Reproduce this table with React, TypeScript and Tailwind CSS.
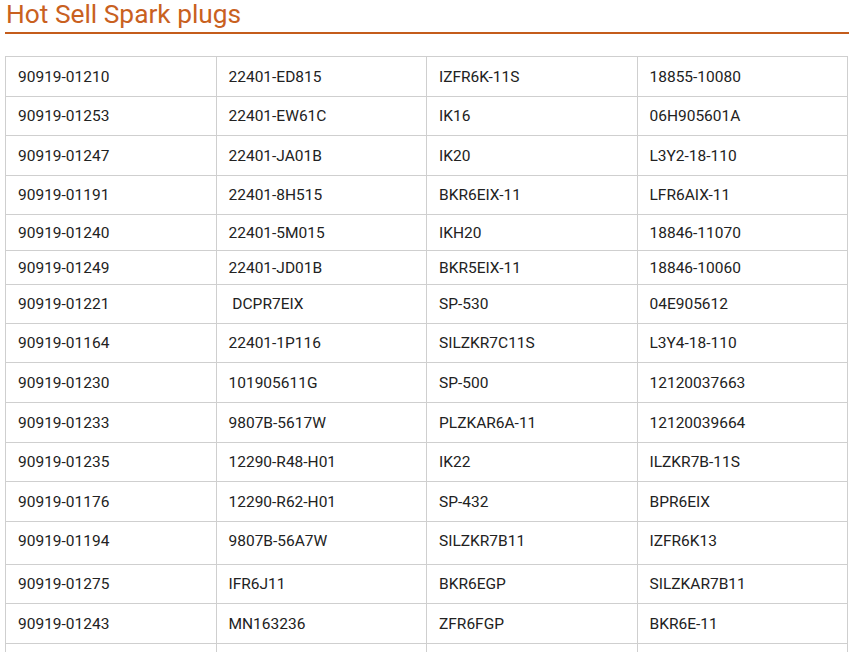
import React from 'react';

// 每行: 四列型号 + 行高(像素) + 可选的内边距
const ROWS: { cells: string[]; h: string; pad?: string }[] = [
  { cells: ['90919-01210', '22401-ED815', 'IZFR6K-11S', '18855-10080'], h: 'h-[40px]' },
  { cells: ['90919-01253', '22401-EW61C', 'IK16', '06H905601A'], h: 'h-[39px]' },
  { cells: ['90919-01247', '22401-JA01B', 'IK20', 'L3Y2-18-110'], h: 'h-[40px]' },
  { cells: ['90919-01191', '22401-8H515', 'BKR6EIX-11', 'LFR6AIX-11'], h: 'h-[39px]' },
  { cells: ['90919-01240', '22401-5M015', 'IKH20', '18846-11070'], h: 'h-[36px]' },
  { cells: ['90919-01249', '22401-JD01B', 'BKR5EIX-11', '18846-10060'], h: 'h-[34px]' },
  { cells: ['90919-01221', '\u00a0DCPR7EIX', 'SP-530', '04E905612'], h: 'h-[39px]' },
  { cells: ['90919-01164', '22401-1P116', 'SILZKR7C11S', 'L3Y4-18-110'], h: 'h-[39px]' },
  { cells: ['90919-01230', '101905611G', 'SP-500', '12120037663'], h: 'h-[40px]' },
  { cells: ['90919-01233', '9807B-5617W', 'PLZKAR6A-11', '12120039664'], h: 'h-[40px]' },
  { cells: ['90919-01235', '12290-R48-H01', 'IK22', 'ILZKR7B-11S'], h: 'h-[39px]' },
  { cells: ['90919-01176', '12290-R62-H01', 'SP-432', 'BPR6EIX'], h: 'h-[40px]' },
  { cells: ['90919-01194', '9807B-56A7W', 'SILZKR7B11', 'IZFR6K13'], h: 'h-[43px]', pad: 'pt-0 pb-[4px]' },
  { cells: ['90919-01275', 'IFR6J11', 'BKR6EGP', 'SILZKAR7B11'], h: 'h-[39px]' },
  { cells: ['90919-01243', 'MN163236', 'ZFR6FGP', 'BKR6E-11'], h: 'h-[40px]' },
  // 下一行只露出顶部, 内容在可视区外
  { cells: ['\u00a0', '\u00a0', '\u00a0', '\u00a0'], h: 'h-[40px]' },
];

export default function App() {
  return (
    <div className="w-[849px] h-[652px] overflow-hidden bg-white pl-[5px] font-['Roboto','Liberation_Sans',sans-serif]">
      {/* 标题 */}
      <h2 className="text-[26.3px] leading-[28px] text-[#c9611f] pl-[1px] pb-1 border-b-2 border-[#c45c1b]">
        Hot Sell Spark plugs
      </h2>

      <table className="mt-[22px] w-[843px] table-fixed border-collapse text-[15.5px] leading-[22px] text-[#222]">
        <tbody>
          {ROWS.map((row, i) => (
            <tr key={i} className={row.h}>
              {row.cells.map((c, j) => (
                <td
                  key={j}
                  className={`border border-[#cfcfcf] px-3 align-middle ${row.pad ?? 'py-0'}`}
                >
                  {c}
                </td>
              ))}
            </tr>
          ))}
        </tbody>
      </table>
    </div>
  );
}
